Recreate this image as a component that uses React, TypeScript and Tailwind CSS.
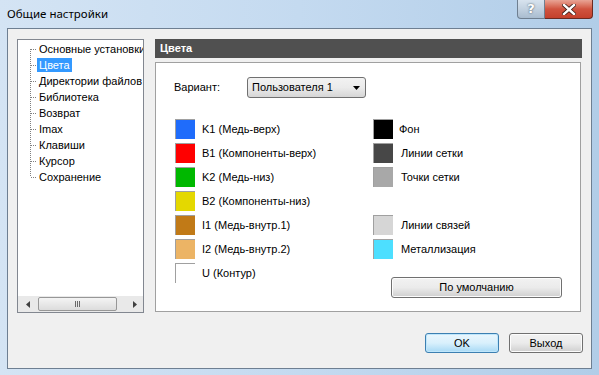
import React from 'react';

const FONT = "font-['Liberation_Sans','Arial',sans-serif]";

const TREE = [
  'Основные установки',
  'Цвета',
  'Директории файлов',
  'Библиотека',
  'Возврат',
  'Imax',
  'Клавиши',
  'Курсор',
  'Сохранение',
];

const LEFT = [
  { c: '#1f6cfb', t: 'K1 (Медь-верх)' },
  { c: '#ff0000', t: 'B1 (Компоненты-верх)' },
  { c: '#00b800', t: 'K2 (Медь-низ)' },
  { c: '#e4d800', t: 'B2 (Компоненты-низ)' },
  { c: '#c17a17', t: 'I1 (Медь-внутр.1)' },
  { c: '#ecb465', t: 'I2 (Медь-внутр.2)' },
  { c: '#ffffff', t: 'U (Контур)' },
];

const RIGHT: ({ c: string; t: string } | null)[] = [
  { c: '#000000', t: 'Фон' },
  { c: '#474747', t: 'Линии сетки' },
  { c: '#a8a8a8', t: 'Точки сетки' },
  null,
  { c: '#d6d6d6', t: 'Линии связей' },
  { c: '#4ddfff', t: 'Металлизация' },
];

function Swatch({ color }: { color: string }) {
  return (
    <div
      className="w-[20px] h-[20px] shrink-0 border-t border-l border-[#a0a0a0]"
      style={{ background: color }}
    />
  );
}

function TreeRow({ label, i, last }: { label: string; i: number; last: boolean }) {
  const selected = label === 'Цвета';
  return (
    <div className="flex items-center h-4 whitespace-nowrap">
      <svg width="8" height="16" className="shrink-0">
        <line
          x1="1.5" x2="1.5"
          y1={i === 0 ? 8 : 0} y2={last ? 8 : 16}
          stroke="#808080" strokeDasharray="1 1"
        />
        <line x1="2" x2="8" y1="8.5" y2="8.5" stroke="#808080" strokeDasharray="1 1" />
      </svg>
      <span
        className={
          selected
            ? 'px-[2px] h-[14px] leading-[14px] bg-[#3399ff] text-white'
            : 'px-[2px] h-[14px] leading-[14px] text-black'
        }
      >
        {label}
      </span>
    </div>
  );
}

function WinButton({ label, def }: { label: string; def?: boolean }) {
  return (
    <button
      className={
        def
          ? 'w-[74px] h-[20px] rounded-[3px] border border-[#3c7fb1] bg-gradient-to-b from-[#eaf6fd] via-[#d9f0fc] to-[#a7d9f5] text-[11px] text-black shadow-[inset_0_0_0_1px_#bfe6fb]'
          : 'w-[74px] h-[20px] rounded-[3px] border border-[#707070] bg-gradient-to-b from-[#f2f2f2] via-[#ebebeb] to-[#cfcfcf] text-[11px] text-black shadow-[inset_0_0_0_1px_#fcfcfc]'
      }
    >
      {label}
    </button>
  );
}

export default function App() {
  return (
    <div
      className={`${FONT} w-[599px] h-[375px] overflow-hidden flex flex-col bg-gradient-to-r from-[#d4e4f4] via-[#c4daf0] to-[#b1cde8] text-[11px] text-black`}
    >
      {/* Title bar */}
      <div className="h-[28px] shrink-0 flex items-start relative">
        <span className="pl-[7px] pt-[6px] text-[11.5px] font-['Noto_Sans','Open_Sans',sans-serif] text-black leading-[16px]">
          Общие настройки
        </span>
        <div className="ml-auto mr-[6px] flex">
          <div className="w-[28px] h-[19px] rounded-bl-[4px] border border-t-0 border-[#6f7f90] bg-gradient-to-b from-[#d8e3ee] via-[#c2d1e0] to-[#a9bccf] flex items-center justify-center text-white text-[13px] font-bold font-['DejaVu_Sans',sans-serif] [text-shadow:0_0_2px_#30404f]">
            ?
          </div>
          <div className="w-[48px] h-[19px] rounded-br-[4px] border border-t-0 border-l-0 border-[#6b2a22] bg-gradient-to-b from-[#e8a495] via-[#d0533f] to-[#c4402c] flex items-center justify-center">
            <svg width="14" height="11" viewBox="0 0 14 11">
              <path d="M2 1 L12 10 M12 1 L2 10" stroke="#3a1a14" strokeWidth="4" strokeLinecap="square" />
              <path d="M2 1 L12 10 M12 1 L2 10" stroke="#ffffff" strokeWidth="2.4" strokeLinecap="square" />
            </svg>
          </div>
        </div>
      </div>

      {/* Client area */}
      <div className="mx-[7px] h-[341px] border border-[#6e7f92] bg-[#f0f0f0] flex flex-col">
        <div className="flex pt-[10px] pl-[9px]">
          {/* Tree */}
          <div className="w-[127px] h-[274px] border border-[#828790] bg-white flex flex-col">
            <div className="flex-1 overflow-hidden pl-[11px] pt-[1px]">
              {TREE.map((t, i) => (
                <TreeRow key={t} label={t} i={i} last={i === TREE.length - 1} />
              ))}
            </div>
            {/* Horizontal scrollbar */}
            <div className="h-[16px] bg-[#e9e9e9] flex items-center">
              <div className="w-[20px] flex justify-center">
                <svg width="4" height="7"><path d="M4 0 L0 3.5 L4 7 Z" fill="#404040" /></svg>
              </div>
              <div className="w-[79px] h-[14px] rounded-[2px] border border-[#979797] bg-gradient-to-b from-[#f4f4f4] to-[#dcdcdc] flex items-center justify-center gap-[1px]">
                <div className="w-[1px] h-[6px] bg-[#6a6a6a]" />
                <div className="w-[1px] h-[6px] bg-[#6a6a6a]" />
                <div className="w-[1px] h-[6px] bg-[#6a6a6a]" />
              </div>
              <div className="flex-1 flex justify-end pr-[6px]">
                <svg width="4" height="7"><path d="M0 0 L4 3.5 L0 7 Z" fill="#404040" /></svg>
              </div>
            </div>
          </div>

          {/* Right section */}
          <div className="ml-[11px] flex flex-col">
            <div className="w-[427px] h-[19px] bg-[#505050] text-white font-bold pl-[5px] flex items-center">
              Цвета
            </div>
            <div className="mt-[4px] w-[426px] h-[250px] border border-[#a0a0a0] bg-white flex flex-col">
              {/* Variant row */}
              <div className="flex items-center mt-[14px] pl-[18px]">
                <span className="w-[73px]">Вариант:</span>
                <div className="w-[119px] h-[21px] rounded-[3px] border border-[#707070] bg-gradient-to-b from-[#f2f2f2] via-[#ebebeb] to-[#d6d6d6] flex items-center pl-[4px] pr-[5px]">
                  <span className="flex-1">Пользователя 1</span>
                  <svg width="7" height="4"><path d="M0 0 L7 0 L3.5 4 Z" fill="#000" /></svg>
                </div>
              </div>

              {/* Colour lists */}
              <div className="flex mt-[21px] pl-[19px]">
                <div className="w-[198px] flex flex-col gap-[4px]">
                  {LEFT.map((r) => (
                    <div key={r.t} className="flex items-center h-[20px]">
                      <Swatch color={r.c} />
                      <span className="ml-[7px]">{r.t}</span>
                    </div>
                  ))}
                </div>
                <div className="flex flex-col gap-[4px]">
                  {RIGHT.map((r, i) =>
                    r ? (
                      <div key={r.t} className="flex items-center h-[20px]">
                        <Swatch color={r.c} />
                        <span className={i === 0 ? 'ml-[6px]' : 'ml-[8px]'}>{r.t}</span>
                      </div>
                    ) : (
                      <div key={i} className="h-[20px]" />
                    )
                  )}
                  <button className="mt-[14px] ml-[18px] w-[171px] h-[21px] rounded-[3px] border border-[#707070] bg-gradient-to-b from-[#f2f2f2] via-[#ebebeb] to-[#cfcfcf] shadow-[inset_0_0_0_1px_#fcfcfc] text-[11px]">
                    По умолчанию
                  </button>
                </div>
              </div>
            </div>
          </div>
        </div>

        {/* Bottom buttons */}
        <div className="flex justify-end gap-[10px] pr-[8px] mt-[20px]">
          <WinButton label="OK" def />
          <WinButton label="Выход" />
        </div>
      </div>
    </div>
  );
}
